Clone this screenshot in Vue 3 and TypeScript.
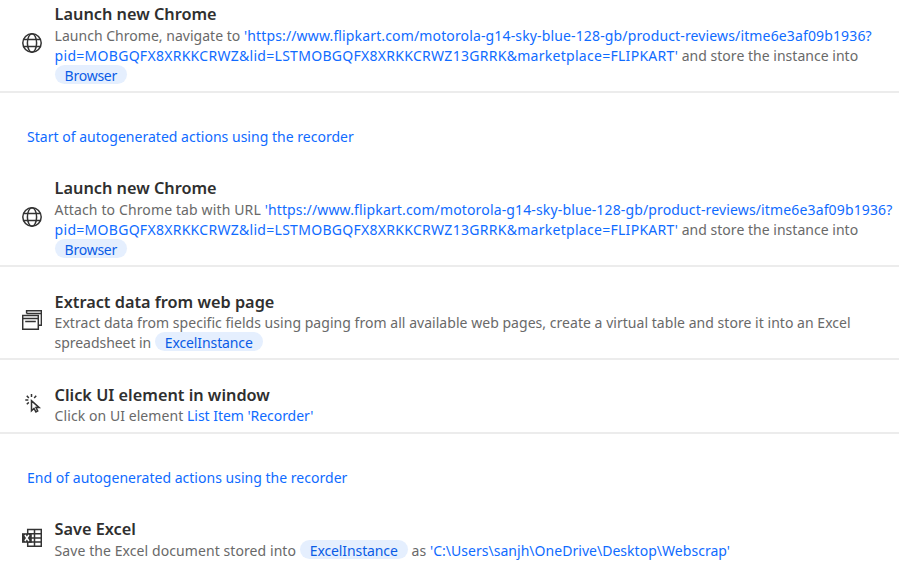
<script setup lang="ts">
type Run = { text: string; kind?: 'link' | 'chip'; tracking?: number; breakAfter?: boolean }
type Step = { type: 'step'; icon: 'globe' | 'windows' | 'click' | 'excel'; title: string; runs: Run[] }
type Note = { type: 'note'; text: string }

const urlRuns: Run[] = [
  { text: "'https://www.flipkart.com/motorola-g14-sky-blue-128-gb/product-reviews/itme6e3af09b1936?", kind: 'link', tracking: 0.142, breakAfter: true },
  { text: "pid=MOBGQFX8XRKKCRWZ&lid=LSTMOBGQFX8XRKKCRWZ13GRRK&marketplace=FLIPKART'", kind: 'link', tracking: 0.285 },
  { text: ' and store the instance into', tracking: 0.02, breakAfter: true },
  { text: 'Browser', kind: 'chip', tracking: -0.25 },
]

const items: (Step | Note)[] = [
  { type: 'step', icon: 'globe', title: 'Launch new Chrome', runs: [{ text: 'Launch Chrome, navigate to ', tracking: 0.02 }, ...urlRuns] },
  { type: 'note', text: 'Start of autogenerated actions using the recorder' },
  { type: 'step', icon: 'globe', title: 'Launch new Chrome', runs: [{ text: 'Attach to Chrome tab with URL ', tracking: 0.127 }, ...urlRuns] },
  {
    type: 'step', icon: 'windows', title: 'Extract data from web page', runs: [
      { text: 'Extract data from specific fields using paging from all available web pages, create a virtual table and store it into an Excel', tracking: 0.037, breakAfter: true },
      { text: 'spreadsheet in ', tracking: -0.05 },
      { text: 'ExcelInstance', kind: 'chip', tracking: -0.11 },
    ],
  },
  { type: 'step', icon: 'click', title: 'Click UI element in window', runs: [{ text: 'Click on UI element ', tracking: 0.07 }, { text: "List Item 'Recorder'", kind: 'link', tracking: -0.04 }] },
  { type: 'note', text: 'End of autogenerated actions using the recorder' },
  {
    type: 'step', icon: 'excel', title: 'Save Excel', runs: [
      { text: 'Save the Excel document stored into ', tracking: 0.08 },
      { text: 'ExcelInstance', kind: 'chip', tracking: -0.11 },
      { text: ' as ', tracking: 0.08 },
      { text: "'C:\\Users\\sanjh\\OneDrive\\Desktop\\Webscrap'", kind: 'link', tracking: 0.03 },
    ],
  },
]
</script>

<template>
  <main class="flow">
    <template v-for="(item, i) in items" :key="i">
      <p v-if="item.type === 'note'" class="note">{{ item.text }}</p>
      <section v-else class="step" :class="item.icon">
        <div class="icon">
          <svg v-if="item.icon === 'globe'" width="20" height="20" viewBox="0 0 20 20">
            <circle cx="10" cy="10" r="9.2" />
            <ellipse cx="10" cy="10" rx="4.6" ry="9.2" />
            <path d="M1.4 6.5h17.2M1.4 13.5h17.2" />
          </svg>
          <svg v-else-if="item.icon === 'windows'" width="20" height="20" viewBox="0 0 20 20">
            <path d="M4.6 3.5V.7h14.8v14.6h-2.6M4.6 3.5h14.8" />
            <path d="M.7 5.6h15.6v13.7H.7zM.7 8.6h15.6M3.2 11.6h10.6" />
          </svg>
          <svg v-else-if="item.icon === 'click'" width="20" height="20" viewBox="0 0 20 20">
            <path d="M9.5 7.8v10l2.5-2.3 1.9 3.4 1.8-.9-1.7-3.4h3.1z" />
            <path d="M9.5 1v3M4.8 2.8l2 2.3M14.2 2.8l-2 2.3M3.3 7.1h3M4.8 11.3l2-1.9" />
          </svg>
          <svg v-else width="20" height="20" viewBox="0 0 20 20">
            <path d="M5.7 1.6h13.6v16.6H5.7zM5.7 5.8h13.6M9 10h10.3M5.7 14.1h13.6M12.5 1.6v16.6" />
            <path class="solid" d="M0 5.2h9.8v9.6H0z" />
            <path class="cross" d="M2.9 7l4 6M6.9 7l-4 6" />
          </svg>
        </div>
        <div class="body">
          <h2>{{ item.title }}</h2>
          <p class="desc"><template v-for="(run, j) in item.runs" :key="j"><span :class="run.kind" :style="{ letterSpacing: (run.tracking ?? 0) + 'px' }">{{ run.text }}</span><br v-if="run.breakAfter"></template></p>
        </div>
      </section>
    </template>
  </main>
</template>

<style>
body { margin: 0; background: #fff; overflow: hidden; }
</style>

<style scoped>
.flow {
  font-family: "Noto Sans", sans-serif;
  font-size: 14px;
  line-height: 20px;
  color: #696969;
}
.step {
  display: flex;
  padding: 24px 0 5px 22px;
  border-bottom: 2px solid #ececec;
}
.step:first-child { padding-top: 3px; }
.note + .step { padding-top: 30px; }
.click { padding-bottom: 6px; }
.excel { border-bottom: 0; }
.icon {
  width: 32.6px;
  flex: none;
  display: flex;
  align-items: center;
  padding-bottom: 3px;
}
.windows .icon, .click .icon { padding-bottom: 5px; }
svg { fill: none; stroke: #333; stroke-width: 1.5; }
.solid { fill: #333; stroke: none; }
.cross { stroke: #fff; stroke-width: 1.5; }
.body { flex: none; white-space: pre; }
h2 {
  margin: 0 0 1px;
  font-size: 16.3px;
  line-height: 22px;
  font-weight: 580;
  color: #2f2f2f;
}
.windows h2, .click h2 { margin-bottom: 0; }
.desc { margin: 0; }
.note {
  margin: 0;
  padding: 34px 0 0 27px;
  color: #0f6bff;
  letter-spacing: 0.02px;
}
.link { color: #0f6bff; }
.chip {
  display: inline-block;
  height: 19px;
  line-height: 21px;
  margin-top: -1px;
  padding: 0 10px;
  border-radius: 10px;
  vertical-align: top;
  background: #e5effe;
  color: #0a5ce6;
}
</style>
